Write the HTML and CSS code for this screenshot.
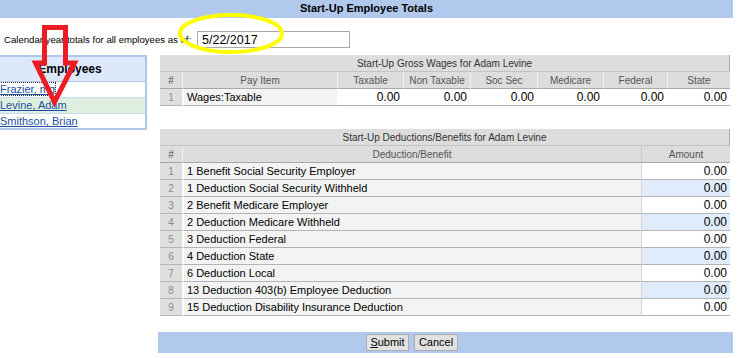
FILE: index.html
```html
<!DOCTYPE html>
<html>
<head>
<meta charset="utf-8">
<link rel="stylesheet" href="styles.css">
</head>
<body>
<div class="page">
  <div class="titlebar">Start-Up Employee Totals</div>
  <div class="asof">
    <span class="asof-label">Calendar year totals for all employees as of:</span>
    <input class="date" type="text" value="5/22/2017">
  </div>
  <div class="main">
    <div class="emp">
      <div class="emp-head">Employees</div>
      <div class="emp-row"><a class="focus" href="#">Frazier, mg</a></div>
      <div class="emp-row sel"><a href="#">Levine, Adam</a></div>
      <div class="emp-row last"><a href="#">Smithson, Brian</a></div>
    </div>
    <div class="tables">
      <table class="grid gross">
        <colgroup>
          <col class="c-num"><col class="c-pay"><col class="c-66"><col class="c-67"><col class="c-67"><col class="c-66"><col class="c-64"><col class="c-63">
        </colgroup>
        <tr class="cap"><th colspan="8">Start-Up Gross Wages for Adam Levine</th></tr>
        <tr class="hdr"><th>#</th><th>Pay Item</th><th>Taxable</th><th>Non Taxable</th><th>Soc Sec</th><th>Medicare</th><th>Federal</th><th>State</th></tr>
        <tr><td class="num">1</td><td class="desc">Wages:Taxable</td><td class="amt">0.00</td><td class="amt">0.00</td><td class="amt">0.00</td><td class="amt">0.00</td><td class="amt">0.00</td><td class="amt">0.00</td></tr>
      </table>
      <table class="grid ded">
        <colgroup><col class="c-num"><col class="c-desc"><col class="c-amt"></colgroup>
        <tr class="cap"><th colspan="3">Start-Up Deductions/Benefits for Adam Levine</th></tr>
        <tr class="hdr"><th>#</th><th>Deduction/Benefit</th><th class="amt-h">Amount</th></tr>
        <tr><td class="num">1</td><td class="desc">1 Benefit Social Security Employer</td><td class="amt">0.00</td></tr>
        <tr class="alt"><td class="num">2</td><td class="desc">1 Deduction Social Security Withheld</td><td class="amt">0.00</td></tr>
        <tr><td class="num">3</td><td class="desc">2 Benefit Medicare Employer</td><td class="amt">0.00</td></tr>
        <tr class="alt"><td class="num">4</td><td class="desc">2 Deduction Medicare Withheld</td><td class="amt">0.00</td></tr>
        <tr><td class="num">5</td><td class="desc">3 Deduction Federal</td><td class="amt">0.00</td></tr>
        <tr class="alt"><td class="num">6</td><td class="desc">4 Deduction State</td><td class="amt">0.00</td></tr>
        <tr><td class="num">7</td><td class="desc">6 Deduction Local</td><td class="amt">0.00</td></tr>
        <tr class="alt"><td class="num">8</td><td class="desc">13 Deduction 403(b) Employee Deduction</td><td class="amt">0.00</td></tr>
        <tr><td class="num">9</td><td class="desc">15 Deduction Disability Insurance Deduction</td><td class="amt">0.00</td></tr>
      </table>
    </div>
  </div>
  <div class="buttons">
    <button class="btn btn-submit" type="button"><u>S</u>ubmit</button>
    <button class="btn btn-cancel" type="button">Cancel</button>
  </div>
  <svg class="marks" width="742" height="358" viewBox="0 0 742 358">
    <ellipse cx="231" cy="33.5" rx="51" ry="18.5" fill="none" stroke="#ffff00" stroke-width="4"/>
    <polygon points="44.5,27.5 65.5,27.5 65.5,63 74.5,63 54.5,102 35.5,63 44.5,63" fill="none" stroke="#ed1c24" stroke-width="5" stroke-linejoin="miter"/>
  </svg>
</div>
</body>
</html>
```

FILE: styles.css
```css
html, body {
  margin: 0;
  padding: 0;
  background: #fff;
  overflow: hidden;
}
body {
  font-family: "Liberation Sans", Arial, sans-serif;
  font-size: 11px;
  color: #000;
}
.page {
  position: relative;
  width: 742px;
  height: 358px;
  overflow: hidden;
}
.titlebar {
  width: 733px;
  height: 18px;
  line-height: 16px;
  background: #b1c9ed;
  text-align: center;
  font-weight: bold;
  font-size: 11px;
  color: #000;
}
.asof {
  display: flex;
  align-items: center;
  margin-top: 13px;
  padding-left: 4px;
  height: 17px;
}
.asof-label {
  flex: 0 0 193px;
  white-space: nowrap;
  font-size: 9.6px;
  color: #000;
}
.date {
  flex: 0 0 153px;
  box-sizing: border-box;
  width: 153px;
  height: 17px;
  margin: 0;
  padding: 0 4px;
  border: 1px solid #a8a8a8;
  font-family: "Liberation Sans", Arial, sans-serif;
  font-size: 12.5px;
  color: #000;
  outline: none;
}
.main {
  display: flex;
  align-items: flex-start;
  margin-top: 7px;
}
.emp {
  box-sizing: border-box;
  width: 154px;
  margin-left: -7px;
  border: 2px solid #afc7ec;
  margin-right: 13px;
}
.emp-head {
  height: 24px;
  line-height: 24px;
  background: #dde8fb;
  text-align: center;
  font-weight: bold;
  font-size: 12px;
  border-bottom: 1px solid #afc7ec;
}
.emp-row {
  height: 15px;
  line-height: 15px;
  border-bottom: 1px solid #c9d9f2;
  padding-left: 5px;
  font-size: 11px;
}
.emp-row.last {
  border-bottom: 0;
  height: 14px;
}
.emp-row.sel {
  background: #dfefdf;
}
.emp-row a {
  color: #1c4f9e;
  text-decoration: underline;
}
.emp-row a.focus {
  outline: 1px dotted #333;
}
.tables {
  width: 570px;
}
.grid {
  width: 570px;
  table-layout: fixed;
  border-collapse: separate;
  border-spacing: 0;
  font-size: 11px;
}
.gross {
  margin-bottom: 23px;
}
.c-num { width: 22px; }
.c-pay { width: 155px; }
.c-66 { width: 66px; }
.c-67 { width: 67px; }
.c-64 { width: 64px; }
.c-63 { width: 63px; }
.c-desc { width: 459px; }
.c-amt { width: 89px; }
.grid th, .grid td {
  padding: 0;
  white-space: nowrap;
  overflow: hidden;
}
.grid .cap th {
  height: 16px;
  background: #dddddd;
  color: #333;
  font-weight: normal;
  font-size: 10px;
  text-align: center;
  border-bottom: 1px solid #c2c2c2;
  border-right: 1px solid #a9a9a9;
}
.grid .hdr th {
  height: 16px;
  background: #dddddd;
  color: #555;
  font-weight: normal;
  font-size: 10px;
  text-align: center;
  border-left: 1px solid #f2f2f2;
  border-bottom: 1px solid #a8a8a8;
}
.grid .hdr th:first-child {
  border-left: 0;
}
.grid .hdr th.amt-h {
  border-left: 1px solid #c8c8c8;
}
.grid td {
  height: 16px;
  border-bottom: 1px solid #b4b4b4;
}
.grid td.num {
  background: #dfdfdf;
  color: #8a8a8a;
  font-size: 10px;
  text-align: center;
}
.grid td.desc {
  background: #f3f3f3;
  border-left: 2px solid #fff;
  padding-left: 3px;
}
.grid td.amt {
  background: #fff;
  text-align: right;
  padding-right: 3px;
  font-size: 12px;
}
.ded td.amt {
  border-left: 1px solid #d6d6d6;
}
.ded tr.alt td.amt {
  background: #e0ebfb;
}
.buttons {
  display: flex;
  align-items: center;
  gap: 5px;
  box-sizing: border-box;
  width: 575px;
  height: 21px;
  margin-top: 16px;
  margin-left: 158px;
  padding-left: 208px;
  background: #b1c9ed;
}
.btn {
  box-sizing: border-box;
  height: 17px;
  margin: 0;
  padding: 0;
  border: 1px solid #adadad;
  background: #e1e1e1;
  font-family: "Liberation Sans", Arial, sans-serif;
  font-size: 11px;
  color: #000;
  line-height: 15px;
}
.btn-submit { width: 43px; }
.btn-cancel { width: 44px; }
.marks {
  position: absolute;
  left: 0;
  top: 0;
  pointer-events: none;
}
```
